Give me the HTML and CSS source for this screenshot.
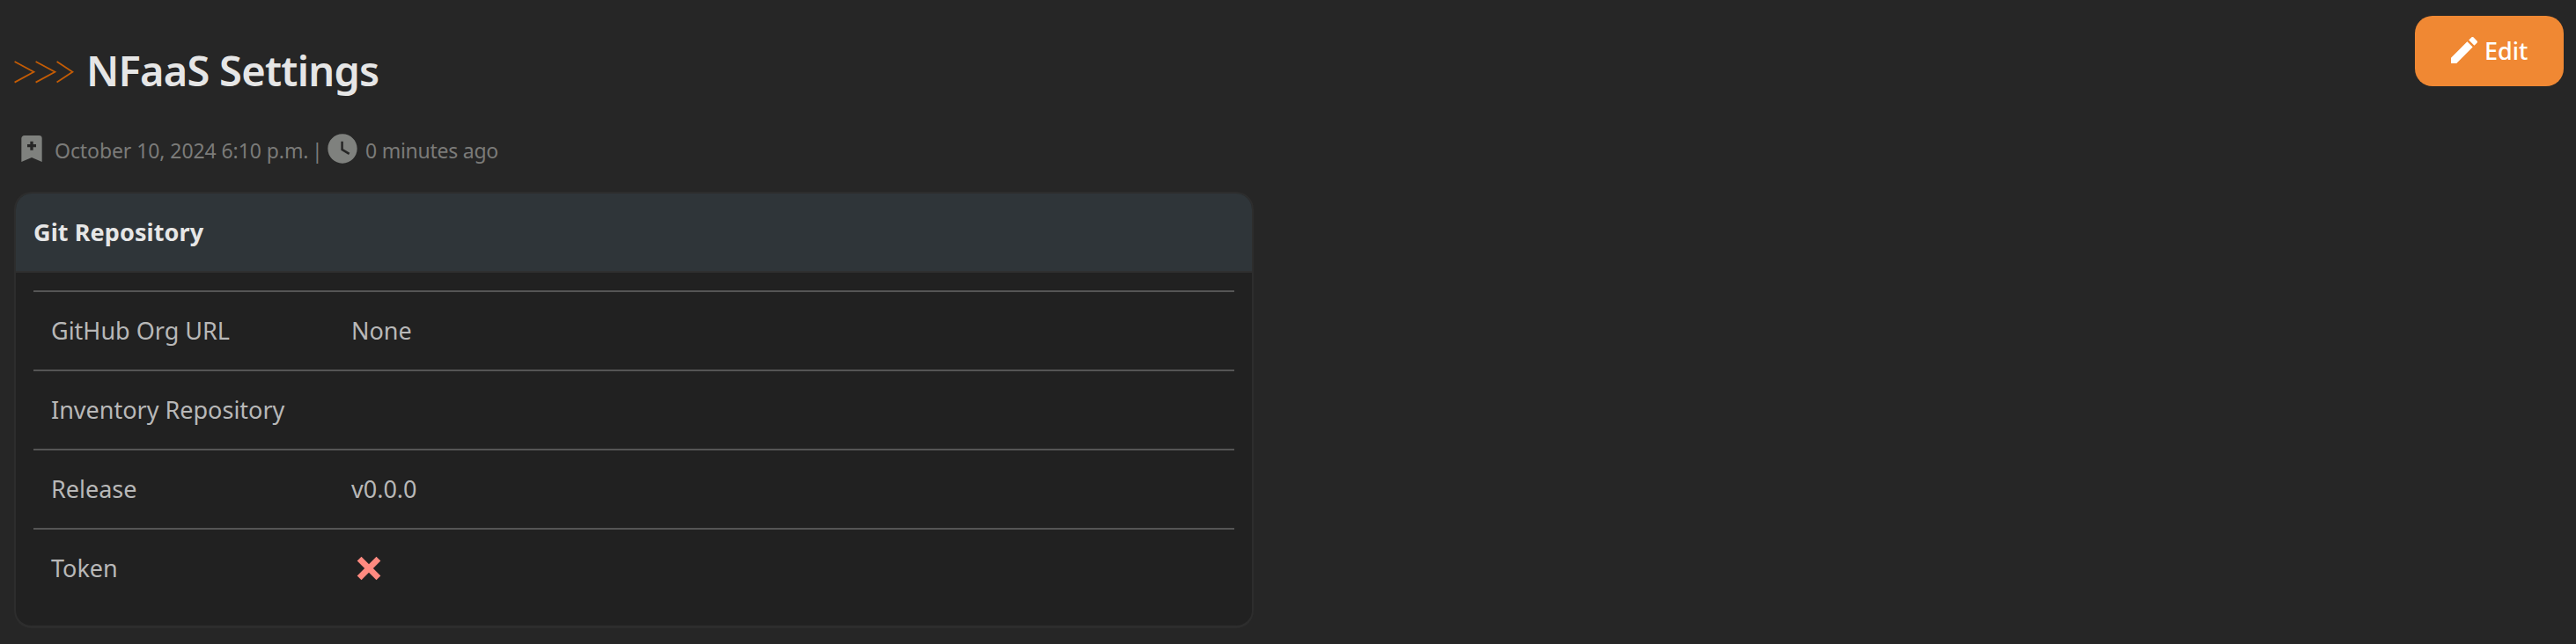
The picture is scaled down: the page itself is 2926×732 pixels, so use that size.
FILE: index.html
```html
<!DOCTYPE html>
<html lang="en">
<head>
<meta charset="utf-8">
<title>NFaaS Settings</title>
<link rel="stylesheet" href="styles.css">
</head>
<body>
<header class="page-header">
  <div class="heading">
    <h1 class="title">
      <svg class="chevrons" viewBox="0 0 70 26" fill="none" aria-hidden="true">
        <path d="M.6 1 22.4 12.8.6 24.6M24.6 1 46.4 12.8 24.6 24.6M48.6 1 66.4 12.8 48.6 24.6"/>
      </svg>
      <span class="title-text">NFaaS Settings</span>
    </h1>
    <p class="meta">
      <svg class="icon" viewBox="0 0 24 24"><path d="M17 3A2 2 0 0 1 19 5V21L12 18L5 21V5C5 3.89 5.9 3 7 3H17M11 7V9H9V11H11V13H13V11H15V9H13V7H11Z"/></svg>
      <span class="created">October 10, 2024 6:10 p.m.</span>
      <span class="bar">|</span>
      <svg class="icon" viewBox="0 0 24 24"><path d="M12 2C6.5 2 2 6.5 2 12S6.5 22 12 22 22 17.5 22 12 17.5 2 12 2M16.2 16.2L11 13V7H12.5V12.2L17 14.9L16.2 16.2Z"/></svg>
      <span class="updated">0 minutes ago</span>
    </p>
  </div>
  <button class="edit" type="button">
    <svg class="icon" viewBox="0 0 24 24"><path d="M20.71 7.04C21.1 6.65 21.1 6 20.71 5.63L18.37 3.29C18 2.9 17.35 2.9 16.96 3.29L15.12 5.12L18.87 8.87M3 17.25V21H6.75L17.81 9.93L14.06 6.18L3 17.25Z"/></svg>
    <span class="edit-text">Edit</span>
  </button>
</header>
<section class="card">
  <h2 class="card-header"><span>Git Repository</span></h2>
  <div class="card-body">
    <dl class="row"><dt>GitHub Org URL</dt><dd>None</dd></dl>
    <dl class="row"><dt>Inventory Repository</dt><dd></dd></dl>
    <dl class="row"><dt>Release</dt><dd>v0.0.0</dd></dl>
    <dl class="row"><dt>Token</dt><dd><svg class="icon cross" viewBox="0 0 24 24"><path d="M20 6.91L17.09 4L12 9.09L6.91 4L4 6.91L9.09 12L4 17.09L6.91 20L12 14.91L17.09 20L20 17.09L14.91 12L20 6.91Z"/></svg></dd></dl>
  </div>
</section>
</body>
</html>
```
FILE: styles.css
```css
* { box-sizing: border-box; }
body {
  margin: 0;
  padding: 18px 14px 0 16px;
  background: #262626;
  color: #b8b8b8;
  font-family: "Noto Sans", "Open Sans", sans-serif;
  font-size: 27px;
  line-height: 40px;
}
h1, h2, p, dl, dt, dd { margin: 0; }
.icon { display: block; flex: none; width: 40px; height: 40px; fill: currentColor; }
.page-header { display: flex; justify-content: space-between; align-items: flex-start; height: 200px; }
.title { display: flex; align-items: center; height: 64px; margin-top: 32px; font-size: 47px; line-height: 64px; font-weight: 600; letter-spacing: -0.75px; color: #e6e6e6; }
.title-text { padding-bottom: 5px; }
.chevrons { width: 70px; height: 26px; margin-right: 12px; stroke: #c45c05; stroke-width: 1.8; }
.meta { display: flex; align-items: center; margin-top: 35px; height: 40px; font-size: 23px; color: #7b7b79; white-space: nowrap; }
.meta .icon { color: #7f817e; }
.created { width: 292px; margin-left: 6px; letter-spacing: -0.08px; }
.bar { width: 15px; }
.updated { margin-left: 6px; letter-spacing: -0.25px; }
.created, .bar, .updated { padding-top: 4px; }
.edit {
  display: flex; align-items: center; width: 169px; height: 80px; padding: 0 0 2px 36px;
  border: 0; border-radius: 20px; background: #f08833; color: #fff;
  font: 500 27px/40px "Noto Sans", "Open Sans", sans-serif;
}
.edit-text { margin-left: 3px; padding-top: 2px; }
.card { width: 1408px; height: 496px; border: 2px solid #2d2d2d; border-bottom-width: 3px; border-radius: 20px; background: #212121; overflow: hidden; }
.card-header { display: flex; align-items: center; height: 90px; padding-left: 20px; border-bottom: 2px solid #2f2f2f; background: #2f3539; color: #e6e6e6; font-size: 27px; font-weight: 700; letter-spacing: 0.1px; }
.card-body { padding: 20px 20px 0; }
.row { display: flex; height: 90px; align-items: center; padding-left: 20px; border-top: 2px solid #555; }
.row dt { width: 341px; white-space: nowrap; }
.cross { color: #ff8a80; }
```
